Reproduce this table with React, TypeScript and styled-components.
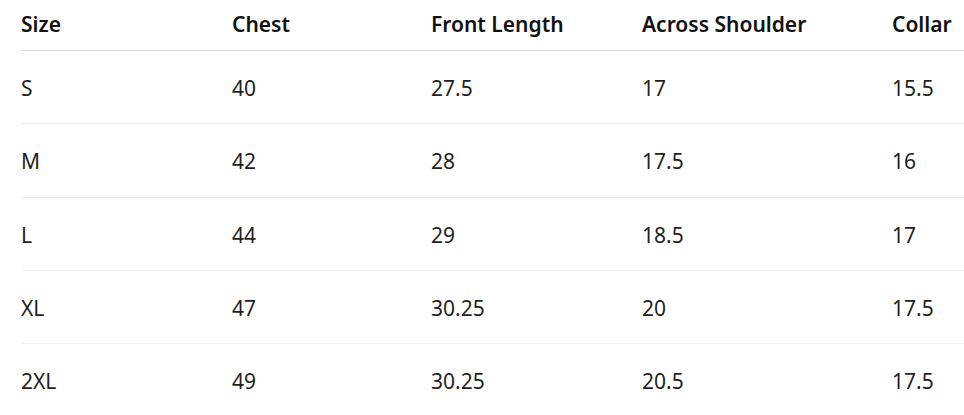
import React from "react";
import styled, { createGlobalStyle } from "styled-components";

const Global = createGlobalStyle`
  html, body { margin: 0; padding: 0; background: #ffffff; }
  body { font-family: "Noto Sans", "Open Sans", "Liberation Sans", sans-serif; color: #1b1b1b; }
`;

const Table = styled.div`
  padding-left: 21px;
  width: 943px;
`;

const Row = styled.div<{ $head?: boolean; $last?: boolean }>`
  display: grid;
  grid-template-columns: 211px 199px 211px 250px 1fr;
  align-items: center;
  box-sizing: border-box;
  height: ${(p) => (p.$head ? "51px" : "73.3px")};
  padding-bottom: ${(p) => (p.$head ? "2px" : "0")};
  padding-top: ${(p) => (p.$head ? "0" : "2px")};
  border-bottom: 1px solid ${(p) => (p.$head ? "#dadada" : p.$last ? "transparent" : "#f0f0f0")};
`;

const Cell = styled.div<{ $head?: boolean }>`
  font-size: 21px;
  font-weight: ${(p) => (p.$head ? 600 : 400)};
  color: ${(p) => (p.$head ? "#111111" : "#1f1f1f")};
  white-space: nowrap;
  letter-spacing: 0;
`;

const headers = ["Size", "Chest", "Front Length", "Across Shoulder", "Collar"];
const rows = [
  ["S", "40", "27.5", "17", "15.5"],
  ["M", "42", "28", "17.5", "16"],
  ["L", "44", "29", "18.5", "17"],
  ["XL", "47", "30.25", "20", "17.5"],
  ["2XL", "49", "30.25", "20.5", "17.5"],
];

export default function App() {
  return (
    <>
      <Global />
      <Table>
        <Row $head>
          {headers.map((h) => (
            <Cell $head key={h}>{h}</Cell>
          ))}
        </Row>
        {rows.map((r, i) => (
          <Row key={i} $last={i === rows.length - 1}>
            {r.map((c, j) => (
              <Cell key={j}>{c}</Cell>
            ))}
          </Row>
        ))}
      </Table>
    </>
  );
}
